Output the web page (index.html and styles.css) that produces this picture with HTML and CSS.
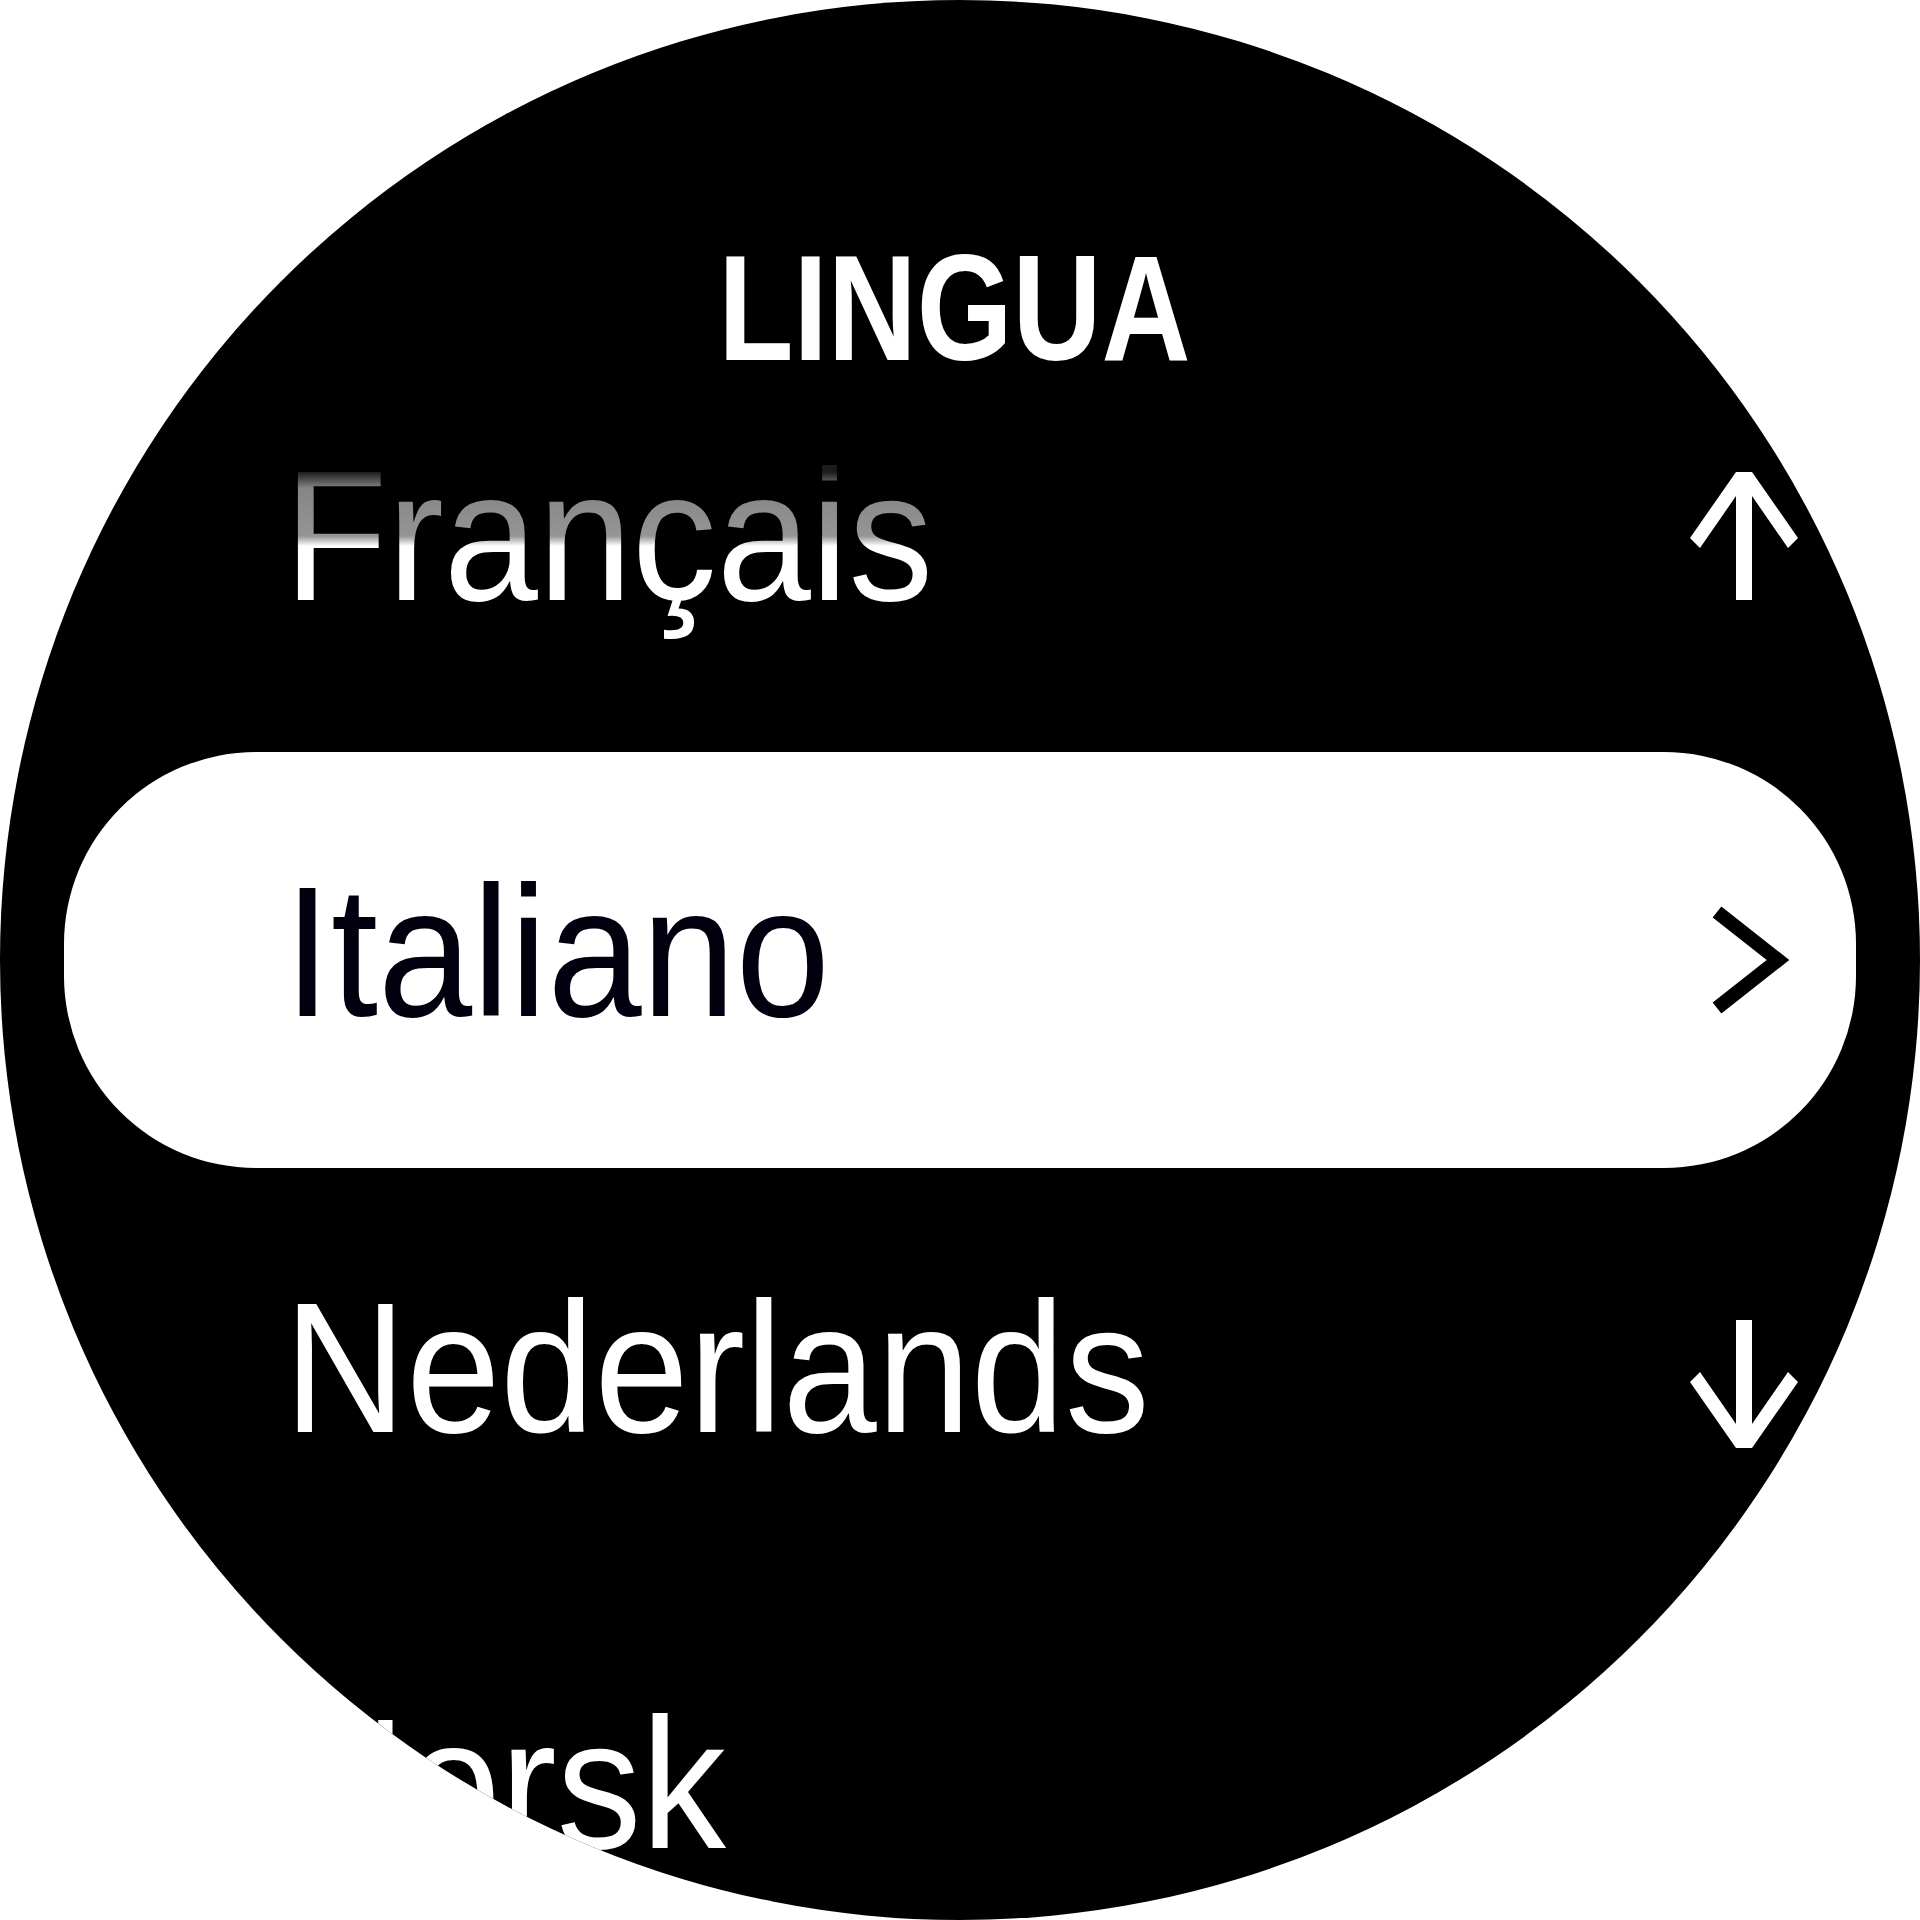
FILE: index.html
```html
<!DOCTYPE html>
<html>
<head>
  <title>Lingua</title>
  <link rel="stylesheet" href="styles.css">
</head>
<body>
  <div class="watch">
    <div class="title"><span>LINGUA</span></div>
    <div class="list">
      <div class="row">
        <span class="name fade">Français</span>
        <svg class="arrow up" viewBox="0 0 112 128">
          <path d="M48 0 H64 L110 66 L100 76 L64 24 V128 H48 V24 L12 76 L2 66 Z"/>
        </svg>
      </div>
      <div class="row selected">
        <span class="name">Italiano</span>
        <svg class="chev" viewBox="0 0 80 112">
          <polyline points="5,8 66,56 5,104"/>
        </svg>
      </div>
      <div class="row">
        <span class="name">Nederlands</span>
        <svg class="arrow down" viewBox="0 0 112 128">
          <path d="M48 128 H64 L110 62 L100 52 L64 104 V0 H48 V104 L12 52 L2 62 Z"/>
        </svg>
      </div>
      <div class="row">
        <span class="name">Norsk</span>
      </div>
    </div>
  </div>
</body>
</html>
```

FILE: styles.css
```css
body {
  margin: 0;
  background-color: #fff;
}
.watch {
  width: 1920px;
  height: 1920px;
  border-radius: 50%;
  overflow: hidden;
  background-color: #000;
  color: #fff;
  font-family: "Liberation Sans", Arial, sans-serif;
}
.title {
  height: 336px;
  box-sizing: border-box;
  padding: 235px 12px 0 0;
  text-align: center;
  font-size: 151px;
  font-weight: bold;
  line-height: 145px;
}
.title span {
  display: inline-block;
  transform: scaleX(0.816);
}
.row {
  height: 416px;
  margin: 0 64px;
  box-sizing: border-box;
  padding: 0 56px 0 220px;
  display: flex;
  justify-content: space-between;
  align-items: flex-start;
  border-radius: 192px;
}
.name {
  display: inline-block;
  font-size: 186px;
  line-height: 399px;
  white-space: nowrap;
  transform: scaleX(0.91);
  transform-origin: left;
}
.fade {
  color: transparent;
  background: linear-gradient(#1c1c1c 136px, #858585 152px, #959595 200px, #fff 210px);
  -webkit-background-clip: text;
  background-clip: text;
}
.selected {
  background-color: #fff;
  color: #02000f;
  padding-right: 64px;
}
.arrow {
  width: 112px;
  height: 128px;
  fill: #fff;
}
.up {
  margin-top: 136px;
}
.down {
  margin-top: 152px;
}
.chev {
  width: 80px;
  height: 112px;
  margin-top: 152px;
  fill: none;
  stroke: #000;
  stroke-width: 14;
  stroke-linejoin: miter;
}
```
